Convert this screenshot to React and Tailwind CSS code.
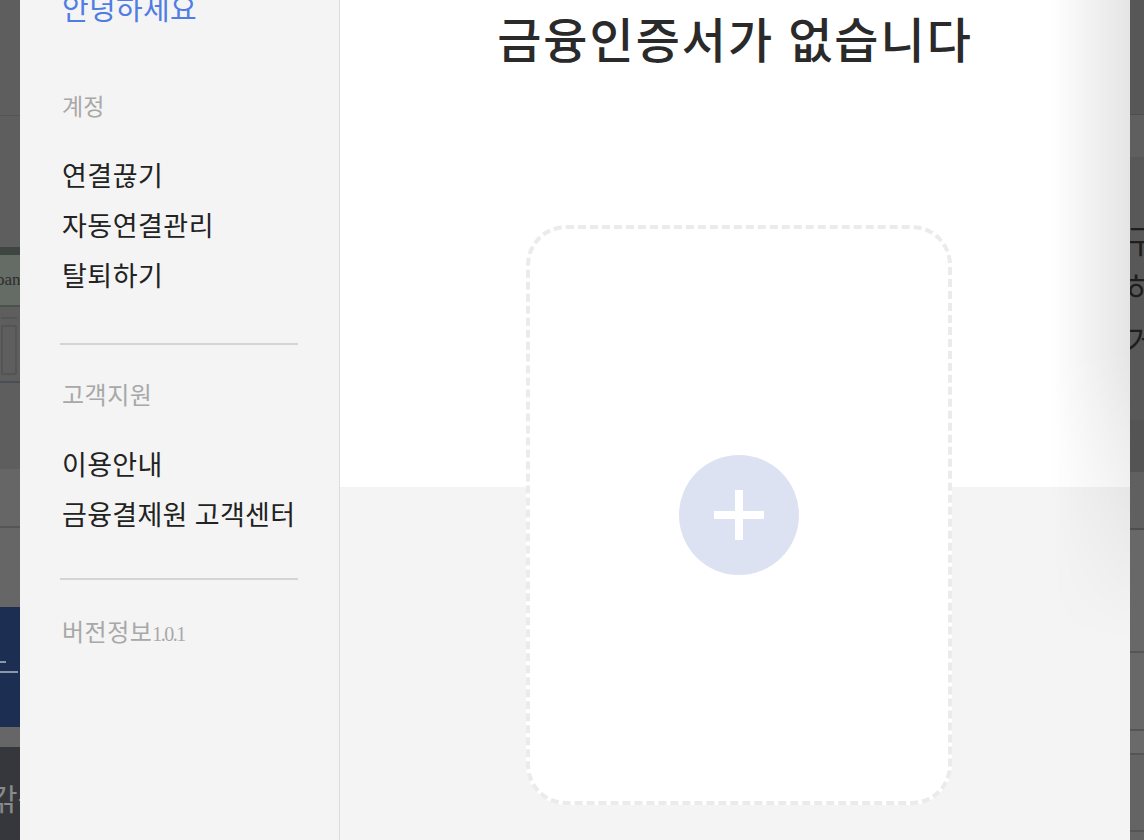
import React from 'react';

const font = { fontFamily: '"Liberation Serif", "Noto Sans CJK KR", serif' };

function LeftStrip() {
  return (
    <div className="w-[20px] shrink-0 h-full overflow-hidden flex flex-col bg-[#5e5e5e]">
      <div className="h-[115px] bg-[#5e5e5e]" />
      <div className="h-[1px] bg-[#545454]" />
      <div className="h-[131px] bg-[#5e5e5e]" />
      <div className="h-[8px] bg-[#3f4641]" />
      <div className="h-[50px] bg-[#656b65] text-[#2e2e2e] text-[17px] leading-[50px] -ml-[4px] whitespace-nowrap" style={font}>oan</div>
      <div className="h-[2px] bg-[#4b524c]" />
      <div className="h-[74px] flex flex-col px-[1px] pt-[10px] pb-[6px]">
        <div className="h-[2px] w-[16px] bg-[#555]" />
        <div className="mt-[6px] flex-1 w-[16px] border-2 border-[#545454] rounded-[2px]" />
      </div>
      <div className="h-[2px] bg-[#4a4f57]" />
      <div className="h-[86px] bg-[#5e5e5e]" />
      <div className="h-[57px] bg-[#666]" />
      <div className="h-[2px] bg-[#555]" />
      <div className="h-[79px] bg-[#666]" />
      <div className="h-[120px] bg-[#1c2f52] flex flex-col justify-center gap-[8px]">
        <div className="h-[2px] w-[6px] bg-[#8d96a8]" />
        <div className="h-[2px] w-[18px] bg-[#8d96a8]" />
      </div>
      <div className="h-[20px] bg-[#666]" />
      <div className="flex-1 bg-[#35373c] text-[#8a8a8a] text-[30px] leading-[30px] pt-[38px] -ml-[10px] whitespace-nowrap" style={font}>
        갂구
      </div>
    </div>
  );
}

function RightStrip() {
  return (
    <div className="w-[14px] shrink-0 h-full overflow-hidden flex flex-col">
      <div className="h-[114px] bg-[#575757]" />
      <div className="h-[1px] bg-[#4e4e4e]" />
      <div className="h-[42px] bg-[#5f5f5f]" />
      <div className="h-[263px] bg-[#585858] -ml-[4px] pt-[68px] text-[32px] text-[#1e1e1e] flex flex-col whitespace-nowrap" style={font}>
        <span className="leading-[34px]">구</span>
        <span className="leading-[34px] mt-[14px]">하</span>
        <span className="leading-[34px] mt-[18px]">거</span>
      </div>
      <div className="h-[52px] bg-[#545454]" />
      <div className="h-[56px] bg-[#606060]" />
      <div className="h-[2px] bg-[#4d4d55]" />
      <div className="h-[121px] bg-[#686868]" />
      <div className="h-[2px] bg-[#555]" />
      <div className="h-[76px] bg-[#686868]" />
      <div className="h-[2px] bg-[#555]" />
      <div className="h-[22px] bg-[#6a6a6a]" />
      <div className="h-[2px] bg-[#555]" />
      <div className="h-[75px] bg-[#646464]" />
      <div className="h-[2px] bg-[#555]" />
      <div className="flex-1 bg-[#646464]" />
    </div>
  );
}

function Sidebar() {
  const account = ['연결끊기', '자동연결관리', '탈퇴하기'];
  const support = ['이용안내', '금융결제원 고객센터'];

  return (
    <aside className="w-[320px] shrink-0 h-full bg-[#f4f4f4] border-r border-[#dcdcdc] pl-[40px] pr-[41px] flex flex-col" style={font}>
      <p className="-mt-[10px] leading-[40px] text-[29px] tracking-[0.3px] text-[#4f7de4] pl-[2px] whitespace-nowrap">안녕하세요</p>

      <p className="mt-[63px] leading-[30px] text-[23px] text-[#a8a8a8] pl-[2px]">계정</p>
      <ul className="mt-[29px] pl-[2px]">
        {account.map((item) => (
          <li key={item} className="leading-[50px] text-[27px] tracking-[0.5px] text-[#222]">{item}</li>
        ))}
      </ul>

      <div className="mt-[41px] h-[2px] bg-[#d4d4d4]" />

      <p className="mt-[36px] leading-[30px] text-[24px] tracking-[0.5px] text-[#a8a8a8] pl-[2px]">고객지원</p>
      <ul className="mt-[30px] pl-[2px]">
        {support.map((item) => (
          <li key={item} className="leading-[50px] text-[27px] tracking-[0.3px] text-[#222] whitespace-nowrap">{item}</li>
        ))}
      </ul>

      <div className="mt-[37px] h-[2px] bg-[#d4d4d4]" />

      <p className="mt-[38px] leading-[30px] text-[24px] tracking-[0.5px] text-[#a8a8a8] pl-[2px] whitespace-nowrap">
        버전정보<span className="text-[20px] tracking-[-1.5px]">1.0.1</span>
      </p>
    </aside>
  );
}

function Main() {
  return (
    <main className="relative flex-1 h-full overflow-hidden bg-[linear-gradient(to_bottom,#ffffff_487px,#f4f4f4_487px)] flex flex-col" style={font}>
      <h1 className="mt-[12px] leading-[60px] text-center text-[48px] tracking-[2px] font-medium text-[#2a2a2a] whitespace-nowrap">
        금융인증서가 없습니다
      </h1>

      <div className="mt-[153px] ml-[186px] w-[426px] h-[580px] shrink-0 rounded-[40px] border-4 border-dashed border-[#ebebeb] bg-white flex items-center justify-center">
        <button className="relative w-[120px] h-[120px] rounded-full bg-[#dde2f2] flex items-center justify-center">
          <span className="block w-[50px] h-[8px] bg-white" />
          <span className="absolute w-[8px] h-[50px] bg-white" />
        </button>
      </div>

      {/* shadow from the panel on the right */}
      <div className="pointer-events-none absolute right-0 top-0 w-[80px] h-[640px] bg-linear-to-r from-transparent to-[rgba(0,0,0,0.1)] [mask-image:linear-gradient(to_bottom,black_55%,transparent)]" />
    </main>
  );
}

export default function App() {
  return (
    <div className="w-[1144px] h-[840px] overflow-hidden flex">
      <LeftStrip />
      <Sidebar />
      <Main />
      <RightStrip />
    </div>
  );
}
